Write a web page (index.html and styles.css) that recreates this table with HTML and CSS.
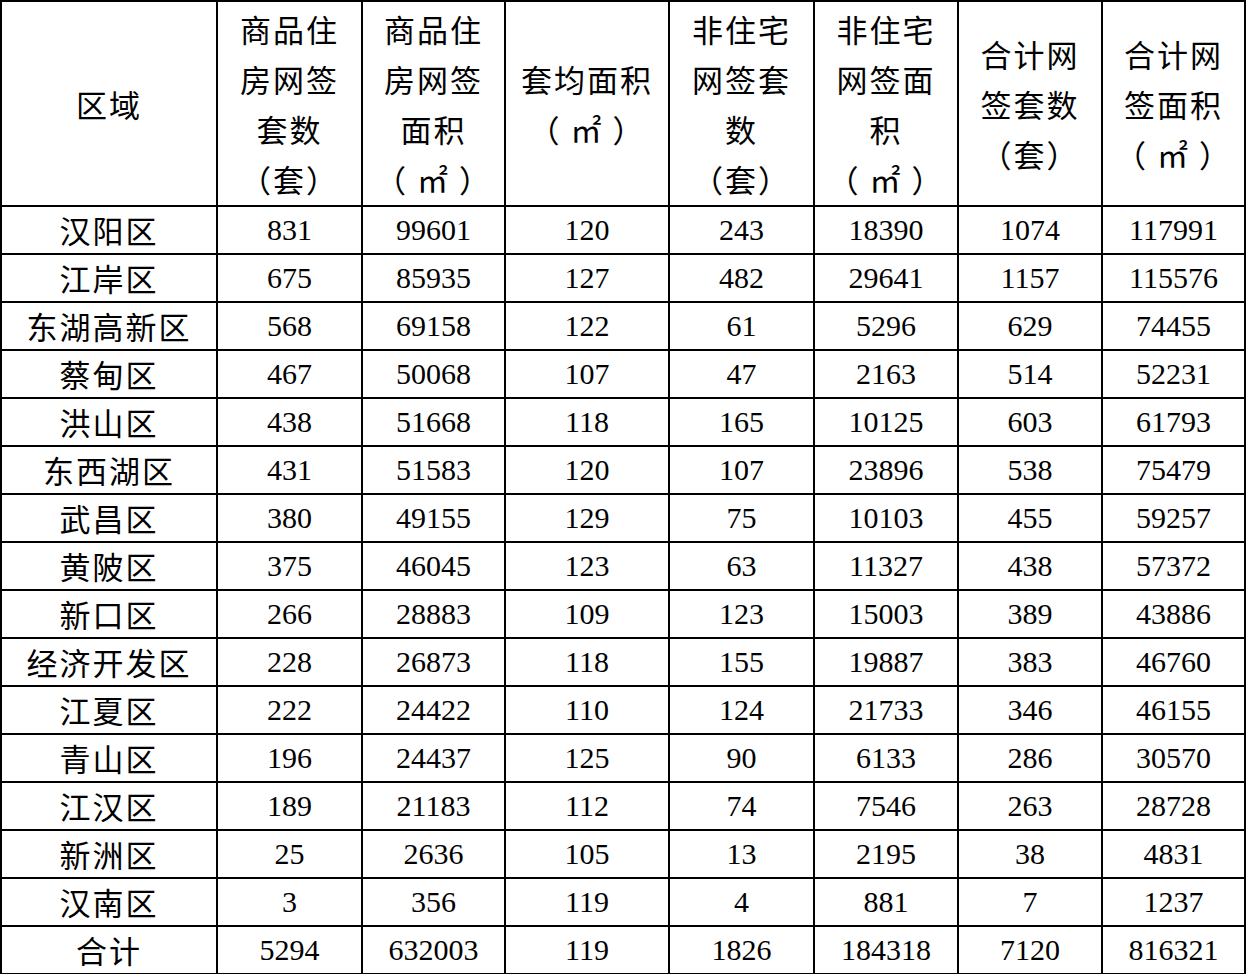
FILE: index.html
```html
<!DOCTYPE html>
<html lang="zh-CN">
<head>
<meta charset="utf-8">
<link rel="stylesheet" href="styles.css">
</head>
<body>
<table class="data">
<colgroup>
<col class="c0"><col class="c1"><col class="c2"><col class="c3"><col class="c4"><col class="c5"><col class="c6"><col class="c7">
</colgroup>
<thead>
<tr class="head">
<th>区域</th>
<th>商品住<br>房网签<br>套数<br>（套）</th>
<th>商品住<br>房网签<br>面积<br>（ ㎡ ）</th>
<th>套均面积<br>（ ㎡ ）</th>
<th>非住宅<br>网签套<br>数<br>（套）</th>
<th>非住宅<br>网签面<br>积<br>（ ㎡ ）</th>
<th>合计网<br>签套数<br>（套）</th>
<th>合计网<br>签面积<br>（ ㎡ ）</th>
</tr>
</thead>
<tbody>
<tr><td class="name">汉阳区</td><td>831</td><td>99601</td><td>120</td><td>243</td><td>18390</td><td>1074</td><td>117991</td></tr>
<tr><td class="name">江岸区</td><td>675</td><td>85935</td><td>127</td><td>482</td><td>29641</td><td>1157</td><td>115576</td></tr>
<tr><td class="name">东湖高新区</td><td>568</td><td>69158</td><td>122</td><td>61</td><td>5296</td><td>629</td><td>74455</td></tr>
<tr><td class="name">蔡甸区</td><td>467</td><td>50068</td><td>107</td><td>47</td><td>2163</td><td>514</td><td>52231</td></tr>
<tr><td class="name">洪山区</td><td>438</td><td>51668</td><td>118</td><td>165</td><td>10125</td><td>603</td><td>61793</td></tr>
<tr><td class="name">东西湖区</td><td>431</td><td>51583</td><td>120</td><td>107</td><td>23896</td><td>538</td><td>75479</td></tr>
<tr><td class="name">武昌区</td><td>380</td><td>49155</td><td>129</td><td>75</td><td>10103</td><td>455</td><td>59257</td></tr>
<tr><td class="name">黄陂区</td><td>375</td><td>46045</td><td>123</td><td>63</td><td>11327</td><td>438</td><td>57372</td></tr>
<tr><td class="name">新口区</td><td>266</td><td>28883</td><td>109</td><td>123</td><td>15003</td><td>389</td><td>43886</td></tr>
<tr><td class="name">经济开发区</td><td>228</td><td>26873</td><td>118</td><td>155</td><td>19887</td><td>383</td><td>46760</td></tr>
<tr><td class="name">江夏区</td><td>222</td><td>24422</td><td>110</td><td>124</td><td>21733</td><td>346</td><td>46155</td></tr>
<tr><td class="name">青山区</td><td>196</td><td>24437</td><td>125</td><td>90</td><td>6133</td><td>286</td><td>30570</td></tr>
<tr><td class="name">江汉区</td><td>189</td><td>21183</td><td>112</td><td>74</td><td>7546</td><td>263</td><td>28728</td></tr>
<tr><td class="name">新洲区</td><td>25</td><td>2636</td><td>105</td><td>13</td><td>2195</td><td>38</td><td>4831</td></tr>
<tr><td class="name">汉南区</td><td>3</td><td>356</td><td>119</td><td>4</td><td>881</td><td>7</td><td>1237</td></tr>
<tr><td class="name">合计</td><td>5294</td><td>632003</td><td>119</td><td>1826</td><td>184318</td><td>7120</td><td>816321</td></tr>
</tbody>
</table>
</body>
</html>
```

FILE: styles.css
```css
html, body {
  margin: 0;
  padding: 0;
  background: #ffffff;
}

.data {
  border-collapse: collapse;
  table-layout: fixed;
  width: 1246px;
  margin: 0;
  color: #000;
  font-family: "Liberation Serif", "Noto Sans CJK SC", serif;
  font-size: 30px;
}

.c0 { width: 216px; }
.c1 { width: 145px; }
.c2 { width: 143px; }
.c3 { width: 164px; }
.c4 { width: 145px; }
.c5 { width: 144px; }
.c6 { width: 144px; }
.c7 { width: 143px; }

.data th,
.data td {
  border: 2px solid #000;
  padding: 0;
  text-align: center;
  vertical-align: middle;
  white-space: nowrap;
  overflow: hidden;
}

.head th {
  height: 203px;
  font-family: "Noto Sans CJK SC", sans-serif;
  font-weight: 400;
  font-size: 31px;
  line-height: 50px;
  letter-spacing: 2px;
}

.data tbody td {
  height: 46px;
  line-height: 46px;
}

.data td.name {
  font-family: "Noto Sans CJK SC", sans-serif;
  font-size: 31px;
  letter-spacing: 2px;
}
```
